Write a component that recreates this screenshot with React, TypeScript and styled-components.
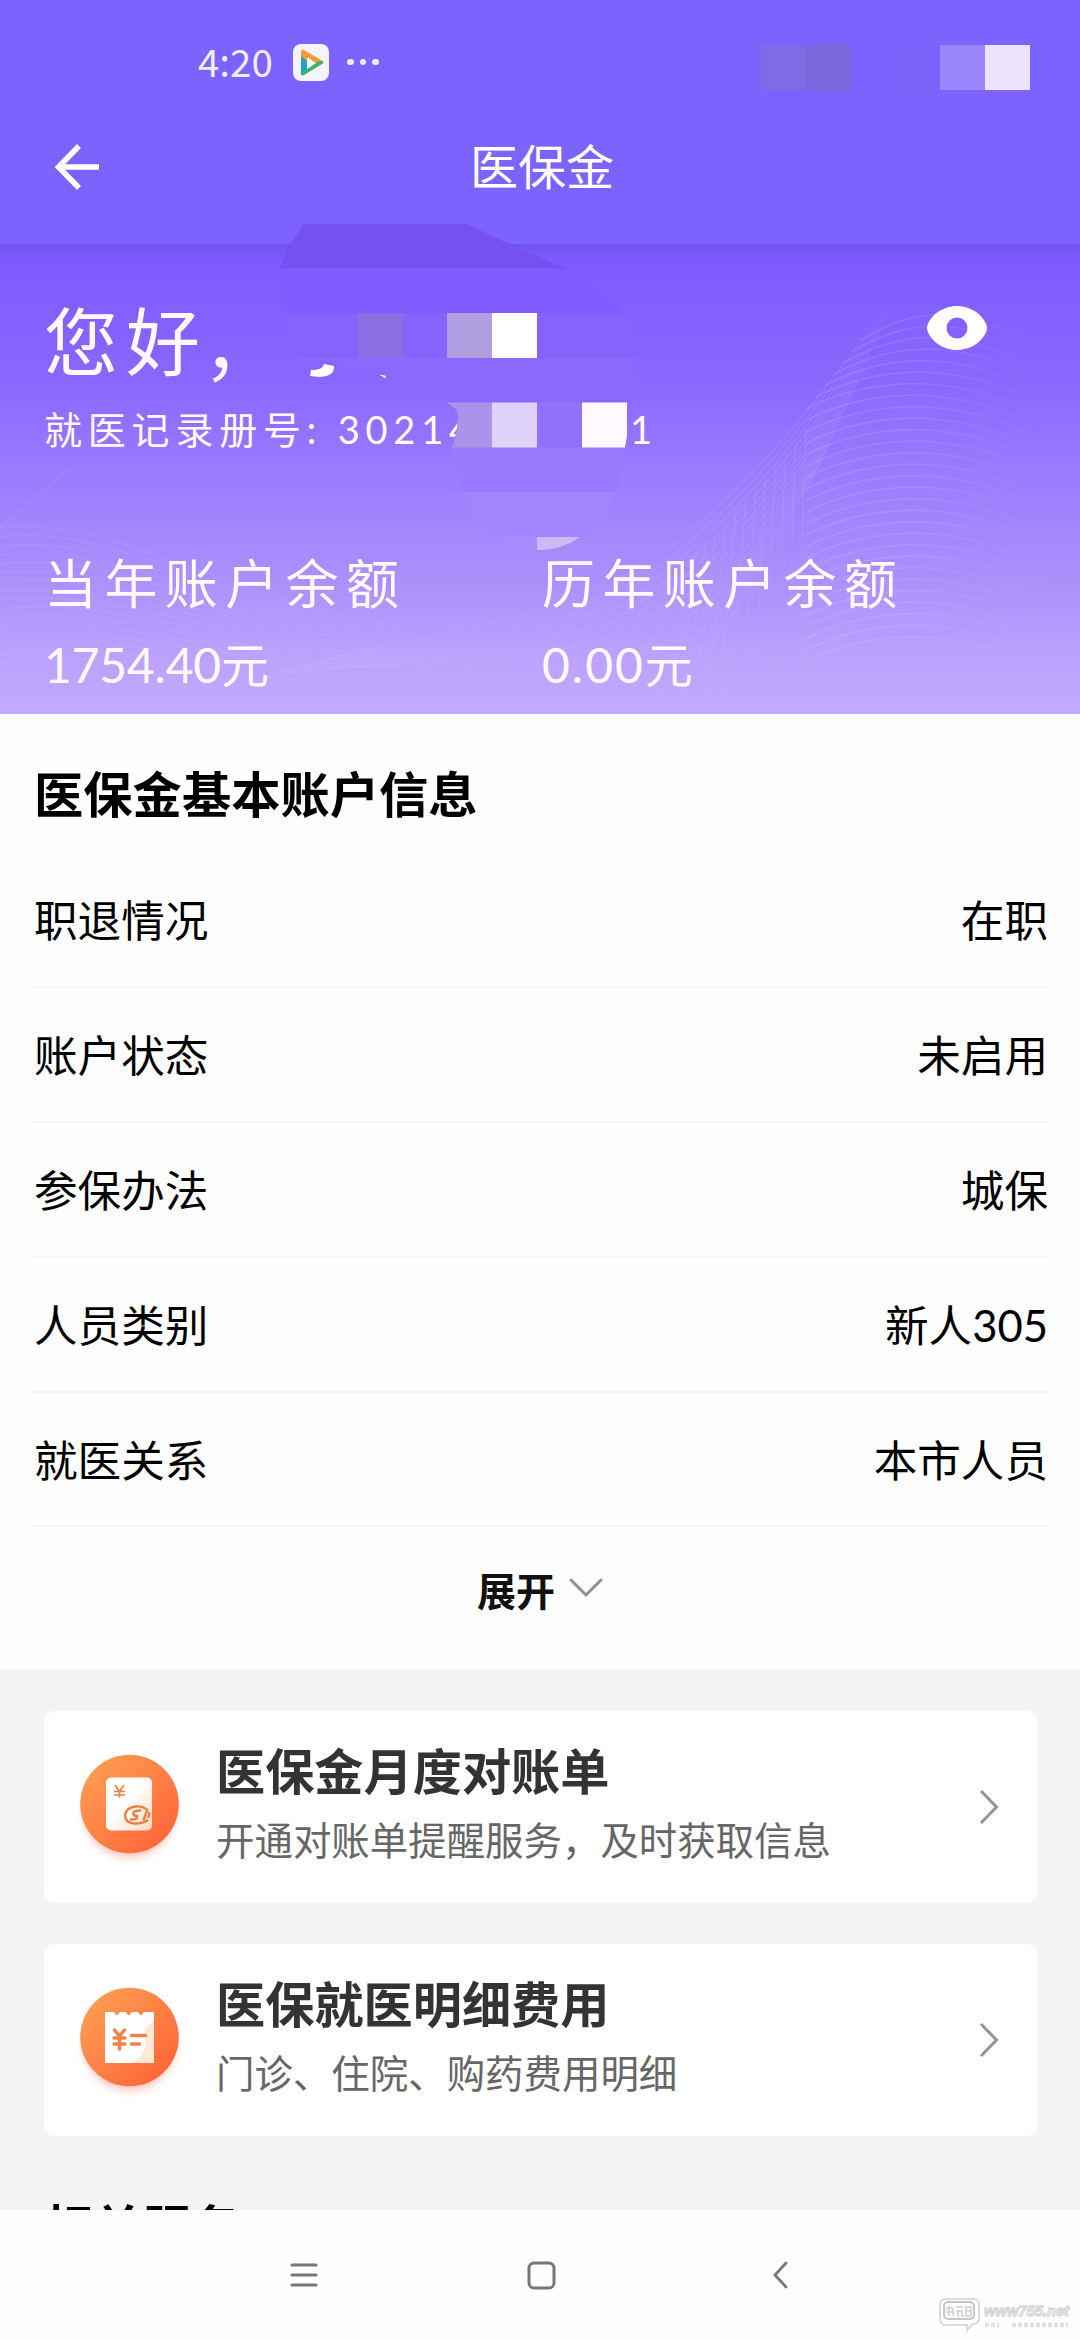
import React from 'react';
import styled, { createGlobalStyle } from 'styled-components';

const Global = createGlobalStyle`
  * { box-sizing: border-box; }
  html, body { margin: 0; padding: 0; background: #fff; }
  body { font-family: Lato, "Noto Sans CJK SC", sans-serif; color: #000; }
`;

const Screen = styled.main`
  position: relative;
  width: 1080px;
  height: 2340px;
  display: flex;
  flex-direction: column;
  overflow: hidden;
  background: #fefefe;
`;

const Header = styled.header`
  height: 244px;
  flex: none;
  background: #7c63fd;
  color: #fff;
`;

const StatusBar = styled.div`
  height: 90px;
  padding: 34px 50px 0 198px;
  display: flex;
  align-items: center;
`;

const Clock = styled.span`
  font-family: "Noto Sans CJK SC", sans-serif;
  width: 95px;
  font-size: 38.5px;
  line-height: 56px;
  margin-top: -4px;
  color: #f1ecff;
`;

const StatusDots = styled.div`
  display: flex;
  gap: 6px;
  margin-left: 18px;
`;

const Dot = styled.i`
  width: 6.5px;
  height: 6.5px;
  border-radius: 50%;
  background: #efeaff;
`;

const StatusBlocks = styled.div`
  display: flex;
  margin: 10px 0 0 auto;
`;

const Block = styled.i<{ $color: string }>`
  width: 44.8px;
  height: 45px;
  background: ${p => p.$color};
`;

const TitleBar = styled.div`
  height: 154px;
  display: grid;
  grid-template-columns: 160px 1fr 160px;
  align-items: center;
  padding: 0 0 0 4px;
`;

const BackButton = styled.button`
  border: 0;
  background: none;
  padding: 0 0 0 49px;
  display: flex;
`;

const PageTitle = styled.h1`
  margin: 0;
  font-size: 48px;
  line-height: 60px;
  font-weight: 400;
  text-align: center;
`;

const Hero = styled.section`
  position: relative;
  height: 470px;
  flex: none;
  padding: 56px 44px 0;
  color: #fffaff;
  background: linear-gradient(180deg, #6f4fe6 0, #7855f5 5px, #7e5aff 16px, #835fff 60px, #8a68ff 140px, #9b7bff 230px, #ad90fb 340px, #bba0fd 410px, #c3abfd 470px);
`;

const Waves = styled.svg`
  position: absolute;
  left: 0;
  top: 0;
`;

const Greeting = styled.div`
  position: relative;
  display: flex;
  justify-content: space-between;
  height: 84px;
  font-size: 74px;
  line-height: 84px;
  letter-spacing: 8px;
`;

const GreetingText = styled.div`
  display: flex;
  align-items: flex-start;
`;

const Comma = styled.span`
  margin: 4px 0 0 -5px;
`;

const EyeButton = styled.button`
  border: 0;
  background: none;
  padding: 6px 49px 0 0;
  display: flex;
  align-items: flex-start;
`;

const RecordLine = styled.div`
  position: relative;
  display: flex;
  margin-top: 20px;
  margin-bottom: 1px;
  font-size: 38px;
  line-height: 50px;
  letter-spacing: 5.8px;
`;

const RecordText = styled.span`
  width: 586px;
  white-space: pre;
`;

const Balances = styled.div`
  position: relative;
  margin-top: 95px;
  display: grid;
  grid-template-columns: 498px 1fr;
`;

const BalanceLabel = styled.div`
  font-size: 53px;
  line-height: 70px;
  letter-spacing: 7.4px;
`;

const BalanceAmount = styled.div<{ $spacing: number }>`
  margin-top: 16px;
  font-size: 48px;
  line-height: 60px;
  letter-spacing: ${p => p.$spacing}px;
`;

const Mosaic = styled.svg`
  position: absolute;
  left: 270px;
  top: 220px;
`;

const Info = styled.section`
  height: 955px;
  flex: none;
  padding: 45px 32px 0;
  background: #fefefe;
`;

const InfoHeading = styled.h2`
  margin: 0 0 24px 2px;
  font-size: 49.3px;
  line-height: 70px;
  font-weight: 700;
`;

const InfoRow = styled.div`
  display: flex;
  justify-content: space-between;
  height: 134.9px;
  padding: 0 0 0 2px;
  font-size: 43.6px;
  line-height: 134px;
  border-bottom: 2px solid #f6f6f6;
`;

const Expand = styled.button`
  width: 100%;
  height: 124px;
  border: 0;
  padding: 0;
  background: none;
  display: flex;
  align-items: center;
  justify-content: center;
  gap: 14px;
  font-family: inherit;
  font-size: 39px;
  font-weight: 700;
  color: #111;
`;

const Services = styled.section`
  flex: 1;
  min-height: 0;
  overflow: hidden;
  padding: 42px 43px 0 44px;
  background: #f4f4f4;
`;

const Card = styled.article`
  height: 192px;
  margin-bottom: 41px;
  padding: 0 38px 0 26px;
  border-radius: 11px;
  background: #fff;
  display: flex;
  align-items: center;
`;

const CardText = styled.div`
  flex: 1;
  margin-left: 28px;
`;

const CardTitle = styled.h3`
  margin: -2px 0 0;
  font-size: 49.2px;
  line-height: 64px;
  font-weight: 700;
  color: #333;
`;

const CardNote = styled.p`
  margin: 9px 0 6px;
  font-size: 38.45px;
  line-height: 56px;
  color: #666;
`;

const Related = styled.h2`
  margin: 0;
  padding-top: 8px;
  font-size: 49.2px;
  line-height: 84px;
  font-weight: 700;
`;

const SystemNav = styled.nav`
  position: relative;
  height: 130px;
  flex: none;
  background: #fefefe;
  display: flex;
  align-items: center;
  padding-left: 290px;
  gap: 209px;
`;

const NavBack = styled.svg`
  margin-left: 7px;
`;

const Watermark = styled.svg`
  position: absolute;
  left: 932px;
  top: 83px;
`;

const PlayBadge = () => (
  <svg width="36" height="37" viewBox="0 0 36 37">
    <rect width="36" height="37" rx="8" fill="#f5f4fa" />
    <path d="M8 8v22q0 2 2 1l5-3V12z" fill="#22a2c8" />
    <path d="M8 8q0-3 3-2l17 10q3 2 1 4l-5 1L14 12v5l-6-5z" fill="#f59b38" />
    <path d="M30 17q1 2-1 3L11 31q-3 1-3-2l6-4 10-7z" fill="#3cb465" />
    <path d="M14 13.500l9 5.500-9 6z" fill="#fff" />
  </svg>
);

const range = (n: number) => Array.from({ length: n }, (_, i) => i);

const HeroWaves = () => (
  <Waves width="1080" height="470" viewBox="0 0 1080 470" fill="none">
    <defs>
      <linearGradient id="fadeRight" x1="560" x2="1050" y1="0" y2="0" gradientUnits="userSpaceOnUse">
        <stop offset="0" stopColor="#e4d4ff" stopOpacity=".16" />
        <stop offset=".7" stopColor="#e4d4ff" stopOpacity=".16" />
        <stop offset="1" stopColor="#e4d4ff" stopOpacity="0" />
      </linearGradient>
      <linearGradient id="fadeLeft" x1="0" x2="620" y1="0" y2="0" gradientUnits="userSpaceOnUse">
        <stop offset="0" stopColor="#e4d4ff" stopOpacity=".1" />
        <stop offset="1" stopColor="#e4d4ff" stopOpacity=".05" />
      </linearGradient>
      <linearGradient id="fadeMesh" x1="0" x2="0" y1="60" y2="460" gradientUnits="userSpaceOnUse">
        <stop offset="0" stopColor="#e4d4ff" stopOpacity=".04" />
        <stop offset=".35" stopColor="#e4d4ff" stopOpacity=".12" />
        <stop offset="1" stopColor="#e4d4ff" stopOpacity=".05" />
      </linearGradient>
    </defs>
    <g stroke="url(#fadeRight)" strokeWidth="1.5">
      {range(29).map(i => {
        const crest = 70 + i * 11.5;
        const startX = Math.max(806, 905 - 0.8 * (crest - 15));
        return <path key={i} d={`M${startX} ${crest + 26}C${startX + 40} ${crest + 4} ${950} ${crest - 26} 1060 ${crest + 46}`} />;
      })}
    </g>
    <g stroke="url(#fadeMesh)" strokeWidth="1.4">
      {range(14).map(i => (
        <path key={i} d={`M${900 - i * 6} ${46 + i * 13}C${810 - i * 3} ${160 + i * 12} ${720 - i * 2} ${320 + i * 6} ${440 + i * 22} ${436 + i * 1.5}`} />
      ))}
      {range(12).map(i => (
        <path key={i} d={`M${696 + i * 10} ${308 - i * 11}C${690 + i * 10} ${360 - i * 6} ${680 + i * 11} 400 ${668 + i * 13} 450`} />
      ))}
    </g>
    <g stroke="url(#fadeLeft)" strokeWidth="1.4">
      {range(16).map(i => (
        <path key={i} d={`M0 ${284 + i * 9}C120 ${270 + i * 9} 230 ${360 + i * 5} 400 ${382 + i * 4}`} />
      ))}
      {range(12).map(i => (
        <path key={i} d={`M${262 + i * 8} ${434 - i}C400 ${386 + i * 3} 520 ${395 + i * 3} ${690 + i * 7} ${306 + i * 9}`} />
      ))}
      <path d="M0 284L70 224" />
    </g>
  </Waves>
);

const MOSAIC_ROWS = [
  [224, '#7551f2'], [268.5, '#805bff'], [313, '#8663fb'], [358, '#8b69ff'],
  [402.5, '#9371fb'], [447.5, '#997aff'], [492, '#a384ff'], [537, '#a98afc'],
] as const;

const MOSAIC_CELLS = [
  [358, 313, 45, '#8b6fe2'], [447, 313, 45, '#b09fe0'], [492, 313, 45, '#ffffff'],
  [447, 402.5, 45, '#ab93ec'], [492, 402.5, 45, '#dfd3fb'], [582, 402.5, 45, '#fffaff'],
  [537, 537, 45, '#cdb9f6'],
] as const;

const PrivacyMosaic = () => (
  <Mosaic width="380" height="340" viewBox="270 220 380 340">
    <defs>
      <clipPath id="smear">
        <path d="M304 224H467L509 244L566 268.500Q612 290 632 325Q645 365 627 405V436L618 485Q612 520 580 537Q562 550 537 550Q508 548 482 527Q457 495 452 447.500Q460 425 457 410L447 402.500Q400 385 385 374L335 362L300 360Q285 330 280 300V268L290 244Z" />
      </clipPath>
    </defs>
    <g clipPath="url(#smear)">
      {MOSAIC_ROWS.map(([y, fill]) => <rect key={y} x="270" y={y} width="380" height="45" fill={fill} />)}
      {MOSAIC_CELLS.map(([x, y, w, fill]) => <rect key={`${x}-${y}`} x={x} y={y} width={w} height="45" fill={fill} />)}
    </g>
    <path d="M311 370q12 0 13-6l10 2q1 10-14 11l-10-1z" fill="#fff" />
    <path d="M379 374.500l6 1 1 3z" fill="#fff" />
  </Mosaic>
);

const StatementIcon = () => (
  <svg width="118" height="140" viewBox="-10 -18 118 140">
    <defs>
      <linearGradient id="orange" x1="0" y1="0" x2="1" y2="1">
        <stop offset="0.1" stopColor="#ff9d52" /><stop offset=".9" stopColor="#ff6538" />
      </linearGradient>
      <linearGradient id="paper" x1="0" y1="0" x2="1" y2="1">
        <stop offset=".45" stopColor="#fff" /><stop offset="1" stopColor="#ffd9bd" />
      </linearGradient>
      <filter id="glow" x="-30%" y="-30%" width="160%" height="160%"><feGaussianBlur stdDeviation="5" /></filter>
    </defs>
    <circle cx="49.5" cy="57" r="45" fill="#ff5a4a" opacity=".4" filter="url(#glow)" />
    <circle cx="49.5" cy="49" r="49.300" fill="url(#orange)" />
    <rect x="26" y="22.500" width="46" height="53" rx="5" fill="url(#paper)" />
    <g fill="none" stroke="#ee7d42" strokeWidth="1.700">
      <path d="M35 30l4.500 6.500L44 30M39.500 36v6.500M34 36.500h11M34 40h11" />
      <path d="M68 55.500q-5-4.500-12-4-10 1-11 8.500 0 8 9 8.500 8 .5 14-3.500M69 57q1 2.500-1 6" strokeWidth="2.300" />
      <path d="M61 55.500q-7-.5-7.500 2.500t3.500 3q1 4-7 3.500M67 55.500l-3.500 10" strokeWidth="2.500" />
    </g>
  </svg>
);

const ExpenseIcon = () => (
  <svg width="118" height="140" viewBox="-10 -18 118 140">
    <circle cx="49.5" cy="57" r="45" fill="#ff5a4a" opacity=".4" filter="url(#glow)" />
    <circle cx="49.5" cy="49" r="49.300" fill="url(#orange)" />
    <path d="M25 25q0-1 1-1h8q2.500 6 5 1l1-1h6q2.500 6 5 1l1-1h6q2.500 6 5 1l1-1h9q1 0 1 1v50H25z" fill="#fff" />
    <path d="M74 33v42H52Q70 65 65 40z" fill="#fce3c5" opacity=".75" />
    <g fill="none" stroke="#f18444" strokeWidth="3.400" strokeLinecap="round">
      <path d="M34.500 42l5 6 5-6M39.500 48v13M34 50h11M34 56h11" />
      <path d="M51.500 47.500h14M51.500 56h8" />
    </g>
  </svg>
);

const ArrowRight = () => (
  <svg width="20" height="36" viewBox="0 0 20 36" fill="none" stroke="#949494" strokeWidth="3">
    <path d="M2 2l15.500 16L2 34" />
  </svg>
);

const ROWS = [
  ['职退情况', '在职'],
  ['账户状态', '未启用'],
  ['参保办法', '城保'],
  ['人员类别', '新人305'],
  ['就医关系', '本市人员'],
];

export default function App() {
  return (
    <Screen>
      <Global />
      <Header>
        <StatusBar>
          <Clock>4:20</Clock>
          <PlayBadge />
          <StatusDots><Dot /><Dot /><Dot /></StatusDots>
          <StatusBlocks>
            <Block $color="#806be7" />
            <Block $color="#7c67dc" />
            <Block $color="#7c63fd" />
            <Block $color="#7b63f9" />
            <Block $color="#9b87fd" />
            <Block $color="#ece4fc" />
          </StatusBlocks>
        </StatusBar>
        <TitleBar>
          <BackButton aria-label="返回">
            <svg width="50" height="48" viewBox="0 0 50 48" fill="none" stroke="#fff" strokeWidth="5.500">
              <path d="M46 24H7M26 3L5.500 24 26 45" />
            </svg>
          </BackButton>
          <PageTitle>医保金</PageTitle>
        </TitleBar>
      </Header>

      <Hero>
        <HeroWaves />
        <Greeting>
          <GreetingText><span>您好</span><Comma>，</Comma></GreetingText>
          <EyeButton aria-label="显示余额">
            <svg width="60" height="44" viewBox="0 0 60 44">
              <path fillRule="evenodd" fill="#fff" d="M30 0C44 0 56 9 59.500 19Q60.500 22 59.500 25C56 35 44 44 30 44S4 35 .5 25Q-.5 22 .5 19C4 9 16 0 30 0zM30 11.500a10.500 10.500 0 1 0 0 21a10.500 10.500 0 1 0 0-21z" />
            </svg>
          </EyeButton>
        </Greeting>
        <RecordLine>
          <RecordText>就医记录册号: 30214</RecordText>
          <span>1</span>
        </RecordLine>
        <Balances>
          <div>
            <BalanceLabel>当年账户余额</BalanceLabel>
            <BalanceAmount $spacing={-0.2}>1754.40元</BalanceAmount>
          </div>
          <div>
            <BalanceLabel>历年账户余额</BalanceLabel>
            <BalanceAmount $spacing={2}>0.00元</BalanceAmount>
          </div>
        </Balances>
      </Hero>
      <PrivacyMosaic />

      <Info>
        <InfoHeading>医保金基本账户信息</InfoHeading>
        {ROWS.map(([label, value]) => (
          <InfoRow key={label}><span>{label}</span><span>{value}</span></InfoRow>
        ))}
        <Expand>
          展开
          <svg width="34" height="22" viewBox="0 0 34 22" fill="none" stroke="#8f8f8f" strokeWidth="3" strokeLinecap="round">
            <path d="M2 2l15 15L32 2" />
          </svg>
        </Expand>
      </Info>

      <Services>
        <Card>
          <StatementIcon />
          <CardText>
            <CardTitle>医保金月度对账单</CardTitle>
            <CardNote>开通对账单提醒服务，及时获取信息</CardNote>
          </CardText>
          <ArrowRight />
        </Card>
        <Card>
          <ExpenseIcon />
          <CardText>
            <CardTitle>医保就医明细费用</CardTitle>
            <CardNote>门诊、住院、购药费用明细</CardNote>
          </CardText>
          <ArrowRight />
        </Card>
        <Related>相关服务</Related>
      </Services>

      <SystemNav>
        <svg width="28" height="26" viewBox="0 0 28 26" stroke="#777" strokeWidth="3" strokeLinecap="round">
          <path d="M2 3h24M2 13h24M2 23h24" />
        </svg>
        <svg width="29" height="29" viewBox="0 0 29 29" fill="none" stroke="#777" strokeWidth="3">
          <rect x="2" y="2" width="25" height="25" rx="5" />
        </svg>
        <NavBack width="16" height="28" viewBox="0 0 16 28" fill="none" stroke="#777" strokeWidth="2.800" strokeLinecap="round">
          <path d="M14 2L3 14l11 12" />
        </NavBack>
        <Watermark width="150" height="46" viewBox="0 0 150 46">
          <path d="M14 6h27q6 0 6 6v13q0 6-6 6l-6 6v-5H14q-6 0-6-6V12q0-6 6-6z" fill="#fff" stroke="#dadada" strokeWidth="2" />
          <rect x="12" y="9" width="30" height="17" rx="4" fill="#fafafa" stroke="#c6c6c6" strokeWidth="2" />
          <path d="M17 13v10M14 15h7M14 19h7M21 23v-8M24 14h7M24 18h7M26 18v6M30 18v5h2M34 14h5v9h-5zM34 18h5" fill="none" stroke="#cfcfcf" strokeWidth="1.500" />
          <text x="52" y="23" fontFamily="Liberation Sans, sans-serif" fontSize="15" fontWeight="700" fontStyle="italic" textLength="85" lengthAdjust="spacingAndGlyphs" fill="#f4f4f4" stroke="#cccccc" strokeWidth=".9">www755.net</text>
          <path d="M53 32h14M80 32h56" stroke="#e2e2e2" strokeWidth="4.500" strokeDasharray="4 2" />
        </Watermark>
      </SystemNav>
    </Screen>
  );
}
